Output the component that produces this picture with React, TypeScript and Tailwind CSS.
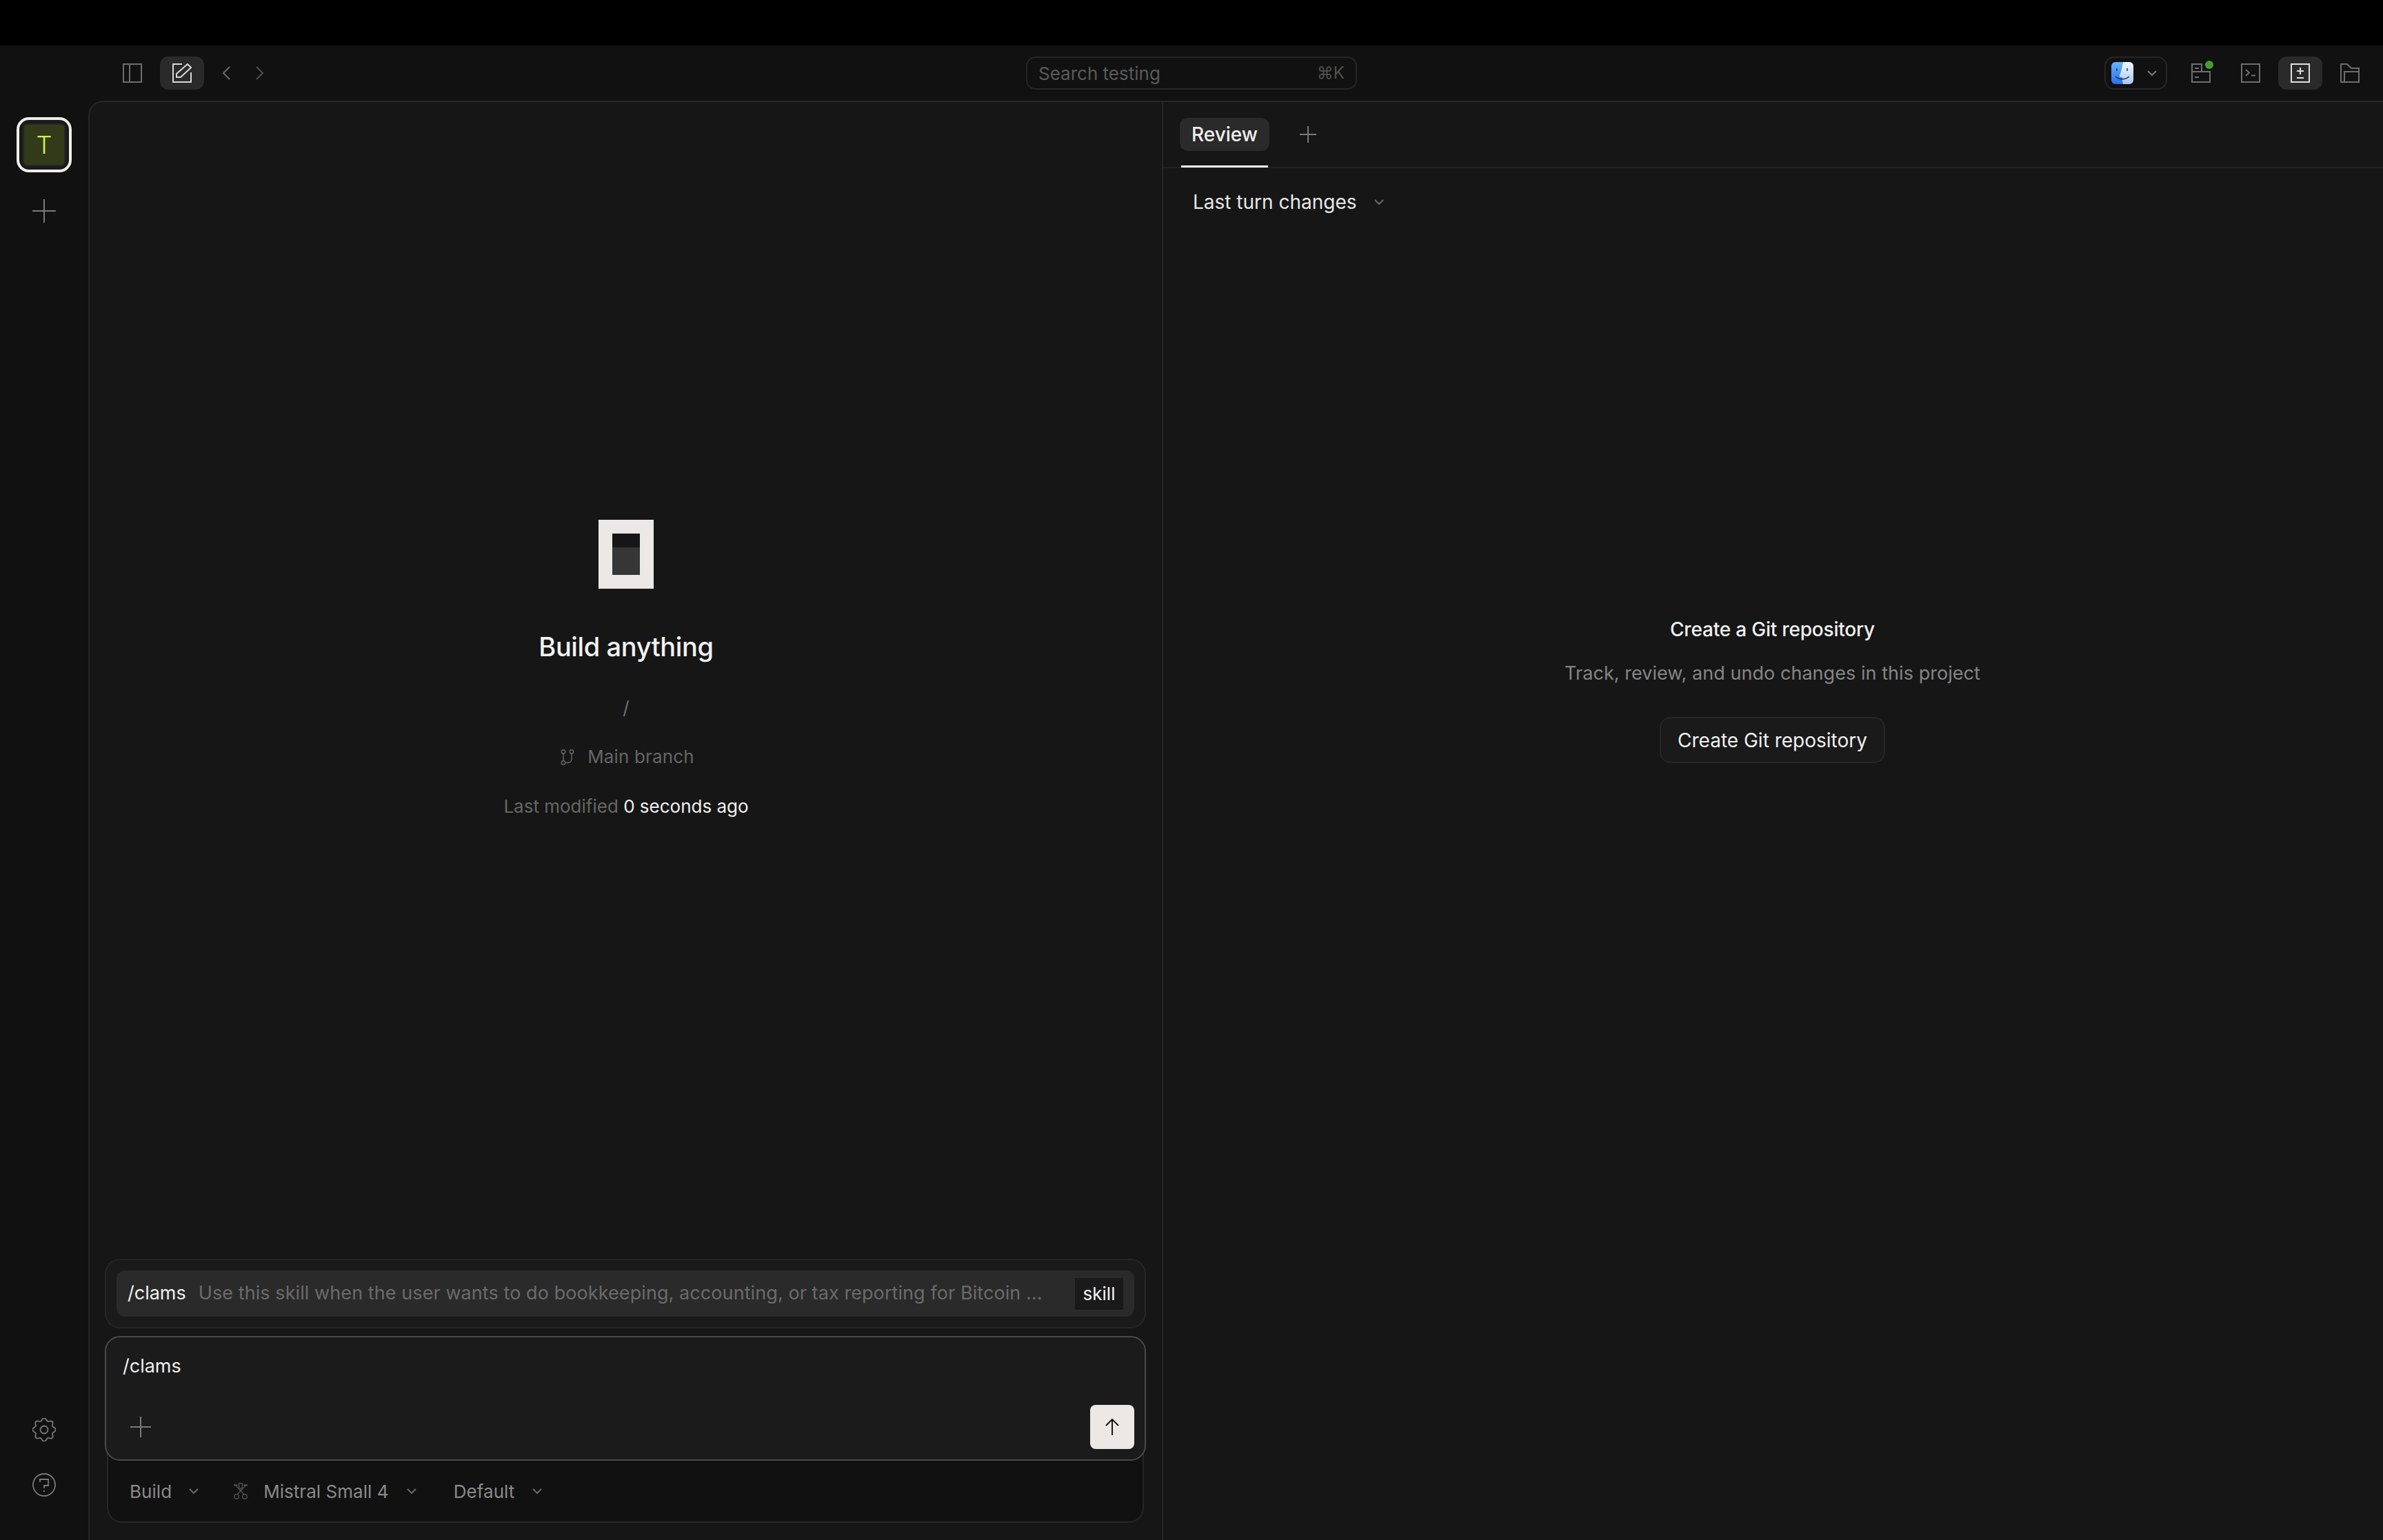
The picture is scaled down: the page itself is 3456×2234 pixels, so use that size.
import type { ReactNode } from "react";

function Chevron({ className = "" }: { className?: string }) {
  return (
    <svg width="14" height="8" viewBox="0 0 14 8" fill="none" stroke="currentColor" strokeWidth="2" className={className}>
      <path d="M1 1l6 6 6-6" />
    </svg>
  );
}

function Plus({ size, className = "" }: { size: number; className?: string }) {
  const mid = size / 2;
  return (
    <svg width={size} height={size} viewBox={`0 0 ${size} ${size}`} fill="none" stroke="currentColor" strokeWidth="2" className={className}>
      <path d={`M0 ${mid}H${size}M${mid} 0V${size}`} />
    </svg>
  );
}

function Icon({ children }: { children: ReactNode }) {
  return (
    <svg width="28" height="28" viewBox="0 0 28 28" fill="none" stroke="currentColor" strokeWidth="2">
      {children}
    </svg>
  );
}

function Finder() {
  return (
    <svg width="32" height="32" viewBox="0 0 32 32">
      <defs>
        <linearGradient id="finder-blue" x1="0" y1="0" x2="0" y2="1">
          <stop offset="0" stopColor="#63b6f6" />
          <stop offset="1" stopColor="#2f6cf0" />
        </linearGradient>
        <linearGradient id="finder-light" x1="0" y1="0" x2="0" y2="1">
          <stop offset="0" stopColor="#f4f8fd" />
          <stop offset="1" stopColor="#a9c8f0" />
        </linearGradient>
      </defs>
      <rect width="32" height="32" rx="6" fill="url(#finder-blue)" />
      <path d="M17 0h9a6 6 0 016 6v20a6 6 0 01-6 6H17c-1-3-1-6-1-10h-4v-2c2-6 4-13 5-20z" fill="url(#finder-light)" />
      <path d="M8 9v4M23 9v4" stroke="#1d2c4a" strokeWidth="1.4" fill="none" />
      <path d="M6 21c6 5 14 5 20 0" stroke="#1d2c4a" strokeWidth="1.4" fill="none" />
    </svg>
  );
}

function MistralMark() {
  return (
    <svg width="22" height="24" viewBox="0 0 22 24" fill="none" stroke="#555555" strokeWidth="1.3">
      <circle cx="5" cy="20" r="3.4" />
      <circle cx="17" cy="20" r="3.4" />
      <path d="M6 17L20 2M16 17L2 2M18 3l-3 .5M20 2v3M4 3l3 .5M2 2v3" />
      <path d="M8.5 4.5c0 3 1 4 2.500 4s2.500-1 2.500-4V1h-5z" />
    </svg>
  );
}

function BranchIcon() {
  return (
    <svg width="20" height="23" viewBox="0 0 20 23" fill="none" stroke="#666666" strokeWidth="1.500">
      <circle cx="4" cy="3.500" r="2.700" />
      <circle cx="16" cy="3.500" r="2.700" />
      <circle cx="4" cy="19.500" r="2.700" />
      <path d="M4 6.200v10.600M16 6.200v7.800c0 3-2 5.500-5 5.500H6.700" />
    </svg>
  );
}

// eight soft lobes, sampled around the centre
function GearIcon() {
  const points = Array.from({ length: 96 }, (_, i) => {
    const angle = (i / 96) * Math.PI * 2;
    const radius = 15 + 1.8 * Math.cos(angle * 8);
    return `${(17 + radius * Math.cos(angle)).toFixed(2)},${(17 + radius * Math.sin(angle)).toFixed(2)}`;
  }).join(" ");
  return (
    <svg width="34" height="34" viewBox="0 0 34 34" fill="none" stroke="#7a7a7a" strokeWidth="1.800" className="mt-auto">
      <polygon points={points} />
      <circle cx="17" cy="17" r="5.500" />
    </svg>
  );
}

function Rail() {
  return (
    <aside className="w-[128px] shrink-0 flex flex-col items-center pt-[24px] pb-[63px]">
      <div className="w-[80px] h-[80px] rounded-[18px] border-[4px] border-[#f0eeea] p-[5px] bg-[#1a1a1a]">
        <div className="w-full h-full rounded-[6px] bg-[#333a19] border-[2px] border-[#262626] flex items-center justify-center text-[36px] font-light leading-none text-[#cdf04f]">
          T
        </div>
      </div>
      <Plus size={34} className="mt-[39px] text-[#7a7a7a]" />
      <GearIcon />
      <svg width="34" height="34" viewBox="0 0 34 34" fill="none" stroke="#7a7a7a" strokeWidth="1.800" className="mt-[46px]">
        <circle cx="17" cy="17" r="16" />
        <path d="M11 13V9h12v9h-6v4" />
        <path d="M17 25v2" />
      </svg>
    </aside>
  );
}

function Composer() {
  return (
    <div className="pl-[22px] pr-[23px] pb-[25px]">
      <div className="rounded-[22px] border-[2px] border-[#262626] bg-[#1a1a1a] p-[15px]">
        <div className="h-[67px] rounded-[12px] bg-[#2a2a2a] px-[16px] flex items-center text-[27px] whitespace-nowrap">
          <span className="text-[#f0f0f0]">/clams</span>
          <span className="ml-[18px] flex-1 tracking-[0.08px] text-[#6a6a6a]">Use this skill when the user wants to do bookkeeping, accounting, or tax reporting for Bitcoin ...</span>
          <span className="h-[46px] w-[70px] flex items-center justify-center bg-[#1a1a1a] text-[26px] text-[#f5f5f5]">skill</span>
        </div>
      </div>
      <div className="relative z-10 mt-[11px] h-[181px] rounded-[22px] border-[2px] border-[#4a4a4a] bg-[#1b1b1b] flex flex-col pl-[24px] pr-[15px]">
        <div className="mt-[22px] h-[40px] leading-[40px] text-[27px] text-[#f0f0f0]">/clams</div>
        <div className="mt-auto mb-[15px] flex items-center justify-between">
          <Plus size={30} className="ml-[11px] text-[#7a7a7a]" />
          <button className="w-[64px] h-[64px] rounded-[8px] bg-[#ece8e5] flex items-center justify-center">
            <svg width="20" height="24" viewBox="0 0 20 24" fill="none" stroke="#161616" strokeWidth="2">
              <path d="M10 24V1M1 10l9-9 9 9" />
            </svg>
          </button>
        </div>
      </div>
      <div className="mx-[3px] -mt-[24px] pt-[24px] h-[114px] rounded-b-[22px] border-[2px] border-t-0 border-[#262626] bg-[#111111] flex items-center pl-[31px] text-[26px] tracking-[0.05px] text-[#8a8a8a]">
        <span>Build</span>
        <Chevron className="ml-[25px] text-[#6a6a6a]" />
        <span className="ml-[50px]"><MistralMark /></span>
        <span className="ml-[22px]">Mistral Small 4</span>
        <Chevron className="ml-[26px] text-[#6a6a6a]" />
        <span className="ml-[54px]">Default</span>
        <Chevron className="ml-[26px] text-[#6a6a6a]" />
      </div>
    </div>
  );
}

function BuildPanel() {
  return (
    <section className="w-[1557px] shrink-0 border-r-[2px] border-[#262626] flex flex-col">
      <div className="flex-1 flex flex-col items-center pt-[606px] pl-[1px]">
        <div className="w-[80px] h-[100px] bg-[#ece8e5] p-[20px]">
          <div className="w-full h-full bg-[#363636]">
            <div className="h-[20px] bg-[#161616]" />
          </div>
        </div>
        <h1 className="mt-[60px] text-[38px] leading-[48px] font-medium tracking-[-0.38px] text-[#f2f2f2]">Build anything</h1>
        <div className="mt-[47px] text-[26px] leading-[36px] text-[#707070]">/</div>
        <div className="mt-[35px] ml-[4px] flex items-center text-[26px] leading-[36px] tracking-[0.15px] text-[#666666]">
          <BranchIcon />
          <span className="ml-[19px]">Main branch</span>
        </div>
        <div className="mt-[36px] text-[26px] leading-[36px] text-[#666666]">
          Last modified <span className="text-[#f0f0f0]">0 seconds ago</span>
        </div>
      </div>
      <Composer />
    </section>
  );
}

function ReviewPanel() {
  return (
    <section className="flex-1 flex flex-col">
      <div className="relative h-[96px] border-b-[2px] border-[#222222] pl-[24px] flex items-center">
        <div className="h-[48px] w-[130px] rounded-[12px] bg-[#2a2a2a] flex items-center justify-center text-[28px] font-medium text-[#f0f0f0]">Review</div>
        <Plus size={24} className="ml-[44px] text-[#7a7a7a]" />
        <div className="absolute left-[26px] bottom-[-1px] w-[126px] h-[3px] bg-[#f5f5f5]" />
      </div>
      <div className="mt-[29px] pl-[43px] h-[40px] flex items-center text-[28px] text-[#e8e8e8]">
        <span>Last turn changes</span>
        <Chevron className="ml-[25px] text-[#6a6a6a]" />
      </div>
      <div className="flex flex-col items-center mt-[580px] pr-[2px]">
        <div className="h-[40px] leading-[40px] text-[28px] font-medium tracking-[-0.2px] text-[#f0f0f0]">Create a Git repository</div>
        <div className="mt-[24px] h-[40px] leading-[40px] text-[27px] tracking-[0.05px] text-[#858585]">Track, review, and undo changes in this project</div>
        <button className="mt-[43px] w-[327px] h-[67px] rounded-[16px] border-[2px] border-[#262626] bg-[#1a1a1a] text-[28px] text-[#f0f0f0]">Create Git repository</button>
      </div>
    </section>
  );
}

function TitleBar() {
  return (
    <header className="h-[80px] shrink-0 grid grid-cols-[1fr_480px_1fr] items-center">
      <div className="pl-[160px] flex items-center">
        <div className="w-[64px] h-[48px] flex items-center justify-center text-[#6e6e6e]">
          <Icon><path d="M1 1h26v26H1zM10 1v26" /></Icon>
        </div>
        <div className="ml-[8px] w-[64px] h-[48px] rounded-[12px] bg-[#2a2a2a] flex items-center justify-center text-[#d8d8d8]">
          <Icon>
            <path d="M14 1H1v26h26V13" />
            <path d="M22 1l5 5-15 14H6v-5z" />
          </Icon>
        </div>
        <div className="ml-[8px] w-[48px] h-[48px] flex items-center justify-center">
          <svg width="11" height="20" viewBox="0 0 11 20" fill="none" stroke="#6a6a6a" strokeWidth="2"><path d="M10 1l-9 9 9 9" /></svg>
        </div>
        <div className="w-[48px] h-[48px] flex items-center justify-center">
          <svg width="11" height="20" viewBox="0 0 11 20" fill="none" stroke="#505050" strokeWidth="2"><path d="M1 1l9 9-9 9" /></svg>
        </div>
      </div>
      <div className="h-[48px] rounded-[14px] border-[2px] border-[#262626] px-[16px] flex items-center justify-between text-[26px] text-[#5a5a5a]">
        <span>Search testing</span>
        <span className="text-[24px] text-[#505050]">⌘K</span>
      </div>
      <div className="pr-[16px] flex items-center justify-end gap-[8px]">
        <div className="mr-[9px] w-[91px] h-[48px] rounded-[14px] border-[2px] border-[#262626] pl-[8px] flex items-center">
          <Finder />
          <Chevron className="ml-[20px] text-[#7a7a7a]" />
        </div>
        <div className="relative w-[64px] h-[48px] flex items-center justify-center text-[#6e6e6e]">
          <Icon>
            <path d="M1 1h14v11h12v15H1zM1 12h14" />
            <path d="M5 7h6M5 20h6" />
          </Icon>
          <span className="absolute left-[38px] top-[6px] w-[12px] h-[12px] rounded-full bg-[#4a9b2e]" />
        </div>
        <div className="w-[64px] h-[48px] flex items-center justify-center text-[#6e6e6e]">
          <Icon>
            <path d="M1 1h26v26H1z" />
            <path d="M7 9l5 4.500-5 4.500M15 17.500h6" />
          </Icon>
        </div>
        <div className="w-[64px] h-[48px] rounded-[12px] bg-[#2a2a2a] flex items-center justify-center text-[#e0e0e0]">
          <Icon>
            <path d="M1 1h26v26H1z" />
            <path d="M14 6v10M9 11h10M9 21h10" />
          </Icon>
        </div>
        <div className="w-[64px] h-[48px] flex items-center justify-center text-[#6e6e6e]">
          <Icon>
            <path d="M1 27V1h9l6 6h11v20z" />
            <path d="M6 27V12h21" />
          </Icon>
        </div>
      </div>
    </header>
  );
}

export default function App() {
  return (
    <div className="w-[3456px] h-[2234px] flex flex-col overflow-hidden bg-[#111111] font-['Inter',sans-serif]">
      <div className="h-[66px] shrink-0 bg-black" />
      <TitleBar />
      <div className="flex-1 flex min-h-0">
        <Rail />
        <main className="flex-1 flex border-l-[2px] border-t-[2px] border-[#262626] rounded-tl-[22px] bg-[#161616]">
          <BuildPanel />
          <ReviewPanel />
        </main>
      </div>
    </div>
  );
}
